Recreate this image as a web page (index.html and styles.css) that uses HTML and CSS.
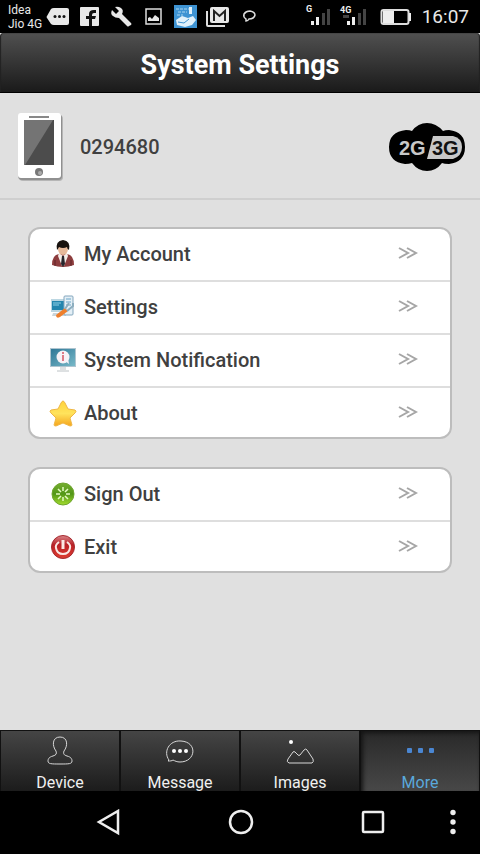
FILE: index.html
```html
<!DOCTYPE html>
<html lang="en">
<head>
<meta charset="utf-8">
<meta name="viewport" content="width=device-width, initial-scale=1">
<title>System Settings</title>
<link rel="stylesheet" href="styles.css">
</head>
<body>
<div class="status">
  <div class="carrier">Idea<br>Jio 4G</div>
  <svg class="notices" width="216" height="33" viewBox="44 0 216 33" fill="#e8e8e8" aria-hidden="true">
    <path d="M54 8h13q2 0 2 2v13q0 2-2 2H54q-2 0-3-1l-4-6q-1-1 0-2l4-7q1-1 3-1z"/>
    <g fill="#111"><circle cx="55" cy="16.500" r="1.500"/><circle cx="59.500" cy="16.500" r="1.500"/><circle cx="64" cy="16.500" r="1.500"/></g>
    <rect x="80" y="7" width="19" height="19" rx="1"/>
    <path fill="#111" d="M89 26v-7h-3v-3h3v-2q0-4 5-4h2v3h-2q-2 0-2 2v1h4l-1 3h-3v7z"/>
    <path d="M131 23l-9-9q2-4-1-6-3-2-6-1l4 4-3 3-4-4q-2 4 1 6 2 2 6 2l8 8q1 1 2 0l2-1q1-1 0-2z"/>
    <rect x="146" y="9" width="15" height="15" fill="none" stroke="#ddd" stroke-width="1.500"/>
    <path d="M148 21v-3l2-1 2 2 3-4 4 3v3z"/>
    <rect x="174" y="5" width="23" height="23" fill="#3e93d2"/>
    <path d="M176 9h13M178 12h9M177 15h6" stroke="#a9d5ef" stroke-dasharray="3 1" fill="none"/>
    <path d="M189 7h3v7h-3zM176 20l6-4 6 2 5-2 3 4-4 5-7 2-8-2z" fill="#e1f1fa"/><path d="M178 22l6 1 5-4" stroke="#3e93d2" fill="none"/>
    <path d="M207 11v14q0 1 1 1h17" fill="none" stroke="#ddd" stroke-width="2"/>
    <rect x="210" y="7" width="19" height="16" rx="2"/>
    <path d="M214 21V11l5.500 5 5.500-5v10" fill="none" stroke="#222" stroke-width="2"/>
    <path d="M246 21v-2q-3-2-2-5 2-3 6-3 5 1 5 4-1 4-6 4-1 2-3 2z" fill="none" stroke="#ddd" stroke-width="1.500"/>
  </svg>
  <svg class="signals" width="108" height="33" viewBox="304 0 108 33" fill="#eee" aria-hidden="true">
    <g class="net"><text x="306" y="12">G</text><text x="340" y="13">4G</text></g>
    <path d="M311 21h3v4h-3zM316 17h3v8h-3zM347 21h3v4h-3zM352 17h3v8h-3z"/>
    <path fill="#444" d="M322 13h3v12h-3zM327 9h3v16h-3zM358 13h3v12h-3zM363 9h3v16h-3zM343 15h6v3h-6z"/>
    <rect x="381.500" y="10" width="27" height="14" rx="2" fill="none" stroke="#ddd" stroke-width="2"/><path d="M409 13h2v8h-2zM383 11h11v12h-11z"/>
  </svg>
  <time class="clock">16:07</time>
</div>

<header class="title-bar"><h1>System Settings</h1></header>

<main>
  <section class="device">
    <svg width="50" height="72" viewBox="0 0 50 72" aria-hidden="true">
      <rect x="3" y="4" width="44" height="66" rx="4" fill="#999" opacity=".6"/><rect x="2" y="3" width="44" height="66" rx="4" fill="#777" opacity=".6"/>
      <rect x="2" y="2" width="43" height="65" rx="3" fill="#fff"/>
      <rect x="13" y="5" width="20" height="2" fill="#888"/>
      <path d="M8 9h30v45H8z" fill="#4c4c4c"/><path d="M8 9h29L9 54H8z" fill="#747474"/>
      <circle cx="23" cy="61" r="4" fill="#777"/><circle cx="24" cy="62" r="2" fill="#aaa"/>
    </svg>
    <span class="device-id">0294680</span>
    <svg class="network" width="78" height="50" viewBox="0 0 78 50" role="img" aria-label="2G 3G">
      <path d="M18 8q4 0 6 1Q30 1 39 1t16 8q2-1 6-1 16 2 16 17 0 15-16 17-5 0-7-1-6 8-15 8t-15-8q-3 1-7 1Q1 40 1 25 1 10 18 8z"/>
      <path d="M45 14h20q9 2 9 11 0 9-9 12H39z" fill="#c8c8c8"/>
      <text x="11" y="33" fill="#c8c8c8">2G</text><text x="44" y="33" fill="#111">3G</text>
    </svg>
  </section>

  <svg class="defs" width="0" height="0" aria-hidden="true"><symbol id="chevrons" viewBox="0 0 20 14"><path d="M1 2l9 5-9 5M9 2l9 5-9 5" fill="none" stroke="#a6a6a6" stroke-width="2"/></symbol></svg>

  <nav class="menu">
    <a href="#account">
      <svg width="28" height="28" viewBox="0 0 28 28" aria-hidden="true">
        <path d="M3 25q0-10 7-11h8q7 1 7 11-11 4-22 0z" fill="#8d3d3e"/><path d="M6 20v6M22 20v6" stroke="#5f2529"/>
        <path d="M10 13l4 3 4-3 1 3-4 10h-2L9 16z" fill="#f4eee9"/><path d="M13 16h2l1 8-2 3-2-3z" fill="#27252b"/>
        <ellipse cx="14" cy="9" rx="5" ry="6" fill="#e6b99a"/>
        <path d="M8 10Q6 1 14 0q8 1 6 10-2-1-2-3-4 2-8 0-1 2-2 3z" fill="#17120f"/>
      </svg>
      <span class="label">My Account</span><svg class="more" width="20" height="14"><use href="#chevrons"/></svg>
    </a>
    <a href="#settings">
      <svg width="28" height="28" viewBox="0 0 28 28" aria-hidden="true">
        <rect x="2" y="6" width="16" height="13" fill="#bcd7e2"/><rect x="3" y="8" width="13" height="9" fill="#2485ad"/><path d="M4 10h8M4 12h6" stroke="#8fd0e6"/>
        <path d="M4 20h12l1 3H3z" fill="#cad5da"/>
        <rect x="15" y="3" width="9" height="19" rx="1" fill="#e4eff6" stroke="#83a6bd"/><path d="M17 6h5M17 9h5M17 12h5" stroke="#6aa6c8"/>
        <path d="M7 22l9-7 3 3-8 6q-4 2-4-2z" fill="#ee7f2d"/><path d="M16 16l4-6M18 18l6-5v-3" fill="none" stroke="#8daebf" stroke-width="2"/>
      </svg>
      <span class="label">Settings</span><svg class="more" width="20" height="14"><use href="#chevrons"/></svg>
    </a>
    <a href="#notification">
      <svg width="28" height="28" viewBox="0 0 28 28" aria-hidden="true">
        <defs><linearGradient id="screen" x2="1" y2="1"><stop stop-color="#2f7797"/><stop offset="1" stop-color="#78b9c8"/></linearGradient></defs>
        <rect x="1" y="2" width="26" height="19" fill="#afc5d0"/><rect x="2" y="3" width="24" height="17" fill="url(#screen)"/>
        <path d="M11 21h6v3h-6z" fill="#dde1e3"/><path d="M8 25h12" stroke="#bcc2c5" stroke-width="1"/>
        <circle cx="14" cy="11" r="6.500" fill="#f7f2f7"/><path d="M16 15l4 3-1-6z" fill="#f7f2f7"/><path d="M14 6v2M14 9v6" stroke="#dd7c88" stroke-width="2"/>
      </svg>
      <span class="label">System Notification</span><svg class="more" width="20" height="14"><use href="#chevrons"/></svg>
    </a>
    <a href="#about">
      <svg width="28" height="28" viewBox="0 0 28 28" aria-hidden="true">
        <defs><linearGradient id="gold" x2="0" y2="1"><stop stop-color="#ffd33c"/><stop offset=".5" stop-color="#ffe35c"/><stop offset="1" stop-color="#f5a51d"/></linearGradient></defs>
        <path d="M14 2q1 0 2 2l3 6 7 1q2 1 0 3l-5 5 2 7q0 1-2 1l-7-3-7 3q-2 0-2-1l2-7-5-5q-2-2 0-3l7-1 3-6q1-2 2-2z" fill="url(#gold)" stroke="#eeb646"/>
      </svg>
      <span class="label">About</span><svg class="more" width="20" height="14"><use href="#chevrons"/></svg>
    </a>
  </nav>

  <nav class="menu">
    <a href="#signout">
      <svg width="28" height="28" viewBox="0 0 28 28" aria-hidden="true">
        <defs><linearGradient id="green" x2="0" y2="1"><stop stop-color="#75ae31"/><stop offset=".5" stop-color="#529617"/><stop offset="1" stop-color="#a4dd2e"/></linearGradient></defs>
        <circle cx="14" cy="14" r="11" fill="url(#green)" stroke="#6fa52f"/>
        <path d="M14 7v4M14 17v4M7 14h4M17 14h4M9 9l3 3M16 16l3 3M19 9l-3 3M12 16l-3 3" stroke="#e4fac2" stroke-width="1.500"/>
      </svg>
      <span class="label">Sign Out</span><svg class="more" width="20" height="14"><use href="#chevrons"/></svg>
    </a>
    <a href="#exit">
      <svg width="28" height="28" viewBox="0 0 28 28" aria-hidden="true">
        <defs><linearGradient id="red" x2="0" y2="1"><stop stop-color="#d9868a"/><stop offset=".4" stop-color="#b92026"/><stop offset="1" stop-color="#df3d30"/></linearGradient></defs>
        <circle cx="14" cy="14" r="11.500" fill="url(#red)" stroke="#a62a30"/>
        <path d="M10 9q-4 3-3 6 1 6 7 6t7-6q1-3-3-6" fill="none" stroke="#fae8e4" stroke-width="2"/><path d="M14 7v9" stroke="#fae8e4" stroke-width="3"/>
      </svg>
      <span class="label">Exit</span><svg class="more" width="20" height="14"><use href="#chevrons"/></svg>
    </a>
  </nav>
</main>

<nav class="tabs">
  <a href="#device">
    <svg width="32" height="32" viewBox="0 0 32 32" aria-hidden="true"><path d="M16 2c-8 0-8 9-4 14 1 3 0 4-3 5-4 1-5 3-5 5 0 3 3 3 12 3s12 0 12-3c0-2-1-4-5-5-3-1-4-2-3-5 4-5 4-14-4-14z"/></svg>
    Device
  </a>
  <a href="#message">
    <svg width="32" height="32" viewBox="0 0 32 32" aria-hidden="true"><path d="M5 25c-6-8 0-20 12-19 17 1 15 21-1 21-3 0-5-1-7-2-1 1-3 1-5 1z"/><g class="dots"><circle cx="10" cy="16" r="2"/><circle cx="16" cy="16" r="2"/><circle cx="22" cy="16" r="2"/></g></svg>
    Message
  </a>
  <a href="#images">
    <svg width="32" height="32" viewBox="0 0 32 32" aria-hidden="true"><path d="M5 28q-3-1-1-4l5-7q1-1 2 0l3 3q1 1 2 0l4-5q2-2 3 0l6 9q1 3-1 4z"/><circle class="dots" cx="7" cy="7" r="2"/></svg>
    Images
  </a>
  <a href="#more" class="active" aria-current="page">
    <svg width="32" height="32" viewBox="0 0 32 32" aria-hidden="true"><g class="dots"><rect x="3" y="13" width="5" height="5" rx="1"/><rect x="14" y="13" width="5" height="5" rx="1"/><rect x="25" y="13" width="5" height="5" rx="1"/></g></svg>
    More
  </a>
</nav>

<div class="system-nav">
  <button type="button" aria-label="Back"><svg width="28" height="28" viewBox="0 0 28 28"><path d="M23 2v22L4 13z"/></svg></button>
  <button type="button" aria-label="Home"><svg width="28" height="28" viewBox="0 0 28 28"><circle cx="14" cy="13" r="11"/></svg></button>
  <button type="button" aria-label="Recent apps"><svg width="28" height="28" viewBox="0 0 28 28"><rect x="4" y="3" width="20" height="20" rx="1"/></svg></button>
  <button type="button" aria-label="Menu"><svg class="solid" width="28" height="28" viewBox="0 0 28 28"><circle cx="14" cy="3.500" r="2.700"/><circle cx="14" cy="13" r="2.700"/><circle cx="14" cy="22.500" r="2.700"/></svg></button>
</div>
</body>
</html>
```
FILE: styles.css
```css
* { box-sizing: border-box; }

body {
  margin: 0;
  min-height: 100vh;
  display: flex;
  flex-direction: column;
  background: #e0e0e0;
  color: #404040;
  font-family: Roboto, "Liberation Sans", sans-serif;
}

a { color: inherit; text-decoration: none; }
svg { display: block; flex: none; }

.status {
  display: flex;
  align-items: center;
  height: 33px;
  padding: 0 11px 0 8px;
  background: #000;
  color: #e8e8e8;
}
.carrier { width: 36px; font-size: 12px; line-height: 14px; white-space: nowrap; }
.signals { margin-left: auto; }
.net { font-size: 9px; font-weight: 700; }
.clock { margin-left: 10px; font-size: 19px; line-height: 24px; }

.title-bar {
  display: flex;
  align-items: center;
  justify-content: center;
  height: 60px;
  padding-top: 4px;
  border-bottom: 1px solid #000;
  border-radius: 4px 4px 0 0;
  background: linear-gradient(#505050, #1a1a1a);
  box-shadow: inset 1px 0 1px #222, inset -1px 0 1px #222;
  color: #fff;
}
.title-bar h1 { margin: 0; font-size: 27px; line-height: 32px; font-weight: 700; }

main { flex: 1; }

.device {
  display: flex;
  align-items: center;
  height: 107px;
  padding: 2px 14px 0 16px;
  border-bottom: 2px solid #cfcfcf;
}
.device-id { margin-left: 14px; font-size: 20px; line-height: 24px; font-weight: 500; }
.network { margin-left: auto; font: 700 20px "Liberation Sans", sans-serif; }

.defs { position: absolute; }

.menu {
  margin: 27px 28px 0;
  border: 2px solid #bdbdbd;
  border-radius: 12px;
  background: #fff;
  overflow: hidden;
}
.menu + .menu { margin-top: 28px; }
.menu a {
  display: flex;
  align-items: center;
  height: 53px;
  padding: 0 32px 2px 19px;
  border-bottom: 2px solid #dedede;
}
.menu a:last-child { height: 49px; padding-bottom: 0; border-bottom: 0; }
.label { flex: 1; margin-left: 7px; font-size: 20px; line-height: 24px; font-weight: 500; }
.more { margin-bottom: 2px; }

.tabs {
  display: grid;
  grid-template-columns: repeat(4, 1fr);
  height: 61px;
  background: #000;
  color: #f0f0f0;
}
.tabs a {
  display: flex;
  flex-direction: column;
  align-items: center;
  gap: 7px;
  padding-top: 4px;
  border: 1px solid #111;
  border-bottom: 0;
  background: linear-gradient(#454545, #1b1b1b);
  font-size: 16px;
  line-height: 18px;
}
.tabs svg { fill: none; stroke: #d8d8d8; }
.tabs .dots { fill: #fff; stroke: none; }
.tabs .active { background: linear-gradient(#292929, #484848); box-shadow: inset 2px 2px 4px #151515; color: #5aa9dc; }
.tabs .active .dots { fill: #4a86d2; }

.system-nav {
  display: grid;
  grid-template-columns: repeat(3, 1fr) 28px;
  height: 63px;
  padding: 0 13px 0 43px;
  background: #000;
}
.system-nav button {
  display: flex;
  align-items: center;
  justify-content: center;
  padding: 0;
  border: 0;
  background: none;
}
.system-nav svg { fill: none; stroke: #eee; stroke-width: 2.500; }
.system-nav .solid { fill: #eee; stroke: none; }
```
